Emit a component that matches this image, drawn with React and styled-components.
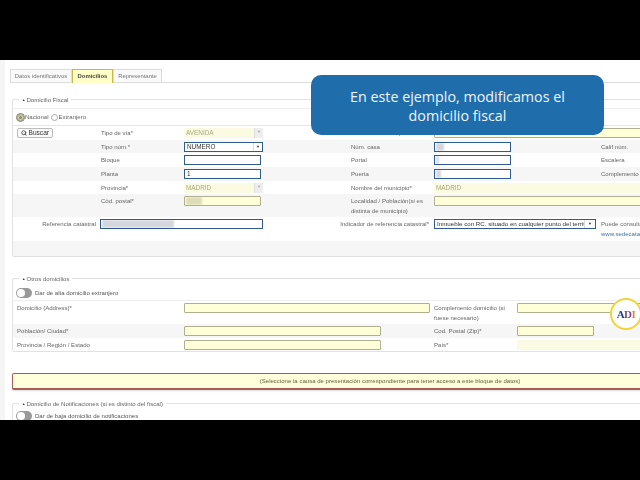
import React from "react";
import styled, { createGlobalStyle, css } from "styled-components";
import { Search } from "lucide-react";

const Global = createGlobalStyle`
  html, body { margin: 0; padding: 0; background: #000; }
  body { width: 640px; height: 480px; overflow: hidden; font-family: "Liberation Sans", Arial, sans-serif; }
`;

const Frame = styled.div`
  width: 640px; height: 480px; background: #000; padding-top: 60px; box-sizing: border-box; position: relative; overflow: hidden;
`;
const Viewport = styled.div`
  width: 640px; height: 360px; background: #fff; overflow: hidden; position: relative;
`;
const Page = styled.div`
  width: 768px; padding: 9px 0 0 0; color: #666; font-size: 6.05px; line-height: 10px; filter: blur(0.4px);
  background: linear-gradient(90deg, #f5f5f5 0, #f5f5f5 5px, #fff 5px);
`;
const Tabs = styled.div`
  display: flex; margin-left: 10px; height: 13px; border-bottom: 1px solid #ddd; align-items: flex-end;
`;
const Tab = styled.div`
  height: 13px; box-sizing: border-box; border: 1px solid #ddd; border-bottom: 0; text-align: center; line-height: 12px; color: #777; background: #fafafa; font-size: 5.9px;
  width: ${p => p.$w}px;
  ${p => p.$active && css`background: #ffffc8; border-color: #c8b84a; color: #444; font-weight: bold; height: 14px; margin-bottom: -1px;`}
`;
const Fieldset = styled.div`
  margin: ${p => p.$top}px 12px 0 12px; border: 1px solid #e2e2e2; border-radius: 2px; position: relative; height: ${p => p.$h}px;
`;
const Legend = styled.div`
  position: absolute; top: -5px; left: 6px; background: #fff; padding: 0 3px; color: #666; line-height: 10px;
  &::before { content: "▲"; font-size: 3.5px; vertical-align: 1px; margin-right: 1px; color: #333; }
`;
const RadioRow = styled.div`
  margin-top: 8px; height: 16px; display: flex; align-items: center; padding-left: 4px; border-bottom: 1px solid #e6e6e6; border-top: 1px solid #f0f0f0;
`;
const Radio = styled.span`
  width: 5px; height: 5px; border-radius: 50%; border: 1px solid #aaa; background: ${p => p.$on ? "#8a8a50" : "#fff"}; margin-right: 1px; margin-left: ${p => p.$gap || 0}px;
  ${p => p.$on && css`box-shadow: inset 0 0 0 1px #ddd; outline: 1px solid #7f7f55;`}
`;
const Row = styled.div`
  display: grid; grid-template-columns: ${p => p.$cols || "88px 83px 167px 83px 167px 1fr"};
  height: ${p => p.$h || 13.7}px; background: ${p => p.$g ? "#f6f6f6" : "#fff"}; align-items: start; box-sizing: border-box; padding-top: 2px;
`;
const Label = styled.div`
  line-height: 10px; white-space: ${p => p.$wrap ? "normal" : "nowrap"}; padding-right: ${p => p.$pr || 0}px; text-align: ${p => p.$right ? "right" : "left"};
  padding-left: ${p => p.$pl || 0}px;
`;
const Field = styled.div`
  height: 10px; box-sizing: border-box; width: ${p => p.$w ? p.$w + "px" : "100%"}; line-height: 7.5px; padding-left: 2px; font-size: 6.4px; overflow: hidden; white-space: nowrap; position: relative;
  ${p => p.$kind === "focus" && css`border: 1.5px solid #2f5c8f; background: #fff; color: #333;`}
  ${p => p.$kind === "yellow" && css`border: 1px solid #b0b090; background: #ffffd8; border-radius: 1px;`}
  ${p => p.$kind === "disabled" && css`background: #fbfbe4; color: #a9a97a; line-height: 10px;`}
`;
const SelectValue = styled.div`
  width: 148px; overflow: hidden; white-space: nowrap; font-size: 6.2px;
`;
const Arrow = styled.span`
  position: absolute; right: 0; top: 0; bottom: 0; width: ${p => p.$w || 8}px; border-left: 1px solid #ddd; background: ${p => p.$off ? "#eee" : "#fff"}; color: ${p => p.$off ? "#aaa" : "#333"}; font-size: 4px; text-align: center; line-height: 7px;
`;
const Smudge = styled.span`
  position: absolute; left: 1px; top: 0; bottom: 0; width: ${p => p.$w}px; background: ${p => p.$c || "#b8bcc8"}; filter: blur(1px); opacity: .6;
`;
const SearchBtn = styled.div`
  width: 36px; height: 10px; margin-left: 4px; border: 1px solid #bbb; border-radius: 2px; background: #fafafa; color: #333; font-size: 6.6px; line-height: 8px; box-sizing: border-box; display: flex; align-items: center; justify-content: center; gap: 1.5px;
`;
const Link = styled.div`color: #3b76a8; line-height: 10px; white-space: nowrap;`;
const ToggleRow = styled.div`
  height: ${p => p.$h}px; display: flex; align-items: center; padding-left: 3px; gap: 3px; color: #555; border-bottom: 1px solid #eee; margin-top: ${p => p.$mt || 0}px; white-space: nowrap;
`;
const Toggle = styled.span`
  width: 16px; height: 10px; border-radius: 5px; background: #999; position: relative; display: inline-block;
  &::before { content: ""; position: absolute; left: 1px; top: 1px; width: 8px; height: 8px; border-radius: 50%; background: #fff; }
`;
const Alert = styled.div`
  margin: 21px 0 0 12px; height: 17px; box-sizing: border-box; border: 1px solid #a85c55; border-bottom-width: 2px; border-radius: 2px; background: #ffffdc; color: #66603c; text-align: center; line-height: 14px; box-shadow: 0 1px 2px #ddd;
`;
const Callout = styled.div`
  position: absolute; left: 311px; top: 15px; width: 293px; height: 60px; background: #1f6dab; border-radius: 10px; color: #eef5fb; font-family: "Open Sans", sans-serif; font-size: 14.3px; line-height: 19px; text-align: center; padding-top: 12px; box-sizing: border-box;
`;
const Badge = styled.div`
  position: absolute; left: 610px; top: 238px; width: 32px; height: 32px; box-sizing: border-box; border: 2px solid #f2d33a; border-radius: 50%; background: #fff; display: flex; align-items: center; justify-content: center; font-family: "Liberation Serif", serif; font-weight: bold; font-size: 11px; letter-spacing: -0.5px; filter: blur(0.3px);
`;
const BadgeLetter = styled.span`color: ${p => p.$c};`;

const F = (p) => <Field {...p} />;
const WideCell = styled.div`grid-column: 5 / 7;`;
const Stack = styled.div`display: flex; flex-direction: column;`;

export default function App() {
  return (
    <Frame>
      <Global />
      <Viewport>
        <Page>
          <Tabs>
            <Tab $w={62}>Datos identificativos</Tab>
            <Tab $w={41} $active>Domicilios</Tab>
            <Tab $w={49}>Representante</Tab>
          </Tabs>
          <Fieldset $top={16} $h={156}>
            <Legend>Domicilio Fiscal</Legend>
            <RadioRow>
              <Radio $on /><span>Nacional</span><Radio $gap={2} /><span>Extranjero</span>
            </RadioRow>
            <Row>
              <SearchBtn><Search size={6} strokeWidth={3} />Buscar</SearchBtn>
              <Label>Tipo de vía*</Label>
              <F $kind="disabled" $w={79}>AVENIDA<Arrow $off>▼</Arrow></F>
              <Label>Nombre de la vía pública*</Label>
              <WideCell><F $kind="yellow" /></WideCell>
            </Row>
            <Row $g>
              <span />
              <Label>Tipo núm.*</Label>
              <F $kind="focus" $w={79}>NUMERO<Arrow>▼</Arrow></F>
              <Label>Núm. casa</Label>
              <F $kind="focus" $w={77}><Smudge $w={8} /></F>
              <Label>Calif núm.</Label>
            </Row>
            <Row>
              <span />
              <Label>Bloque</Label>
              <F $kind="focus" $w={77} />
              <Label>Portal</Label>
              <F $kind="focus" $w={77}><Smudge $w={3} /></F>
              <Label>Escalera</Label>
            </Row>
            <Row $g>
              <span />
              <Label>Planta</Label>
              <F $kind="focus" $w={77}>1</F>
              <Label>Puerta</Label>
              <F $kind="focus" $w={77}><Smudge $w={5} /></F>
              <Label>Complemento domicilio</Label>
            </Row>
            <Row>
              <span />
              <Label>Provincia*</Label>
              <F $kind="disabled" $w={79}>MADRID<Arrow $off>▼</Arrow></F>
              <Label>Nombre del municipio*</Label>
              <WideCell><F $kind="disabled">MADRID</F></WideCell>
            </Row>
            <Row $g $h={23}>
              <span />
              <Label>Cód. postal*</Label>
              <F $kind="yellow" $w={77}><Smudge $w={16} $c="#c5c8a0" /></F>
              <Label $pr={2} $wrap>Localidad / Población(si es distinta de municipio)</Label>
              <WideCell><F $kind="yellow" /></WideCell>
            </Row>
            <Row $h={24} $cols="87px 167px 167px 167px 1fr">
              <Label $right $pr={4}>Referencia catastral</Label>
              <F $kind="focus" $w={163}><Smudge $w={72} /></F>
              <Label $right $pr={5}>Indicador de referencia catastral*</Label>
              <F $kind="focus" $w={162}><SelectValue>Inmueble con RC. situado en cualquier punto del territorio</SelectValue><Arrow $w={10}>▼</Arrow></F>
              <Stack>
                <Label>Puede consultar</Label>
                <Link>www.sedecatastro.gob.es</Link>
              </Stack>
            </Row>
            <Row $g $h={15} />
          </Fieldset>
          <Fieldset $top={21} $h={72}>
            <Legend>Otros domicilios</Legend>
            <ToggleRow $h={14} $mt={7}><Toggle />Dar de alta domicilio extranjero</ToggleRow>
            <Row $h={23} $cols="171px 250px 83px 1fr">
              <Label $pl={4}>Domicilio (Address)*</Label>
              <F $kind="yellow" $w={246} />
              <Label $wrap>Complemento domicilio (si fuese necesario)</Label>
              <F $kind="yellow" />
            </Row>
            <Row $g $cols="171px 250px 83px 1fr">
              <Label $pl={4}>Población/ Ciudad*</Label>
              <F $kind="yellow" $w={197} />
              <Label>Cod. Postal (Zip)*</Label>
              <F $kind="yellow" $w={77} />
            </Row>
            <Row $cols="171px 250px 83px 1fr">
              <Label $pl={4}>Provincia / Región / Estado</Label>
              <F $kind="yellow" $w={197} />
              <Label>País*</Label>
              <F $kind="disabled" />
            </Row>
          </Fieldset>
          <Alert>(Seleccione la causa de presentación correspondiente para tener acceso a este bloque de datos)</Alert>
          <Fieldset $top={13} $h={40}>
            <Legend>Domicilio de Notificaciones (si es distinto del fiscal)</Legend>
            <ToggleRow $h={14} $mt={5}><Toggle />Dar de baja domicilio de notificaciones</ToggleRow>
          </Fieldset>
        </Page>
        <Callout>En este ejemplo, modificamos el<br />domicilio fiscal</Callout>
        <Badge><BadgeLetter $c="#1d3f8f">A</BadgeLetter><BadgeLetter $c="#7a4a8a">D</BadgeLetter><BadgeLetter $c="#e08a3a">I</BadgeLetter></Badge>
      </Viewport>
    </Frame>
  );
}
